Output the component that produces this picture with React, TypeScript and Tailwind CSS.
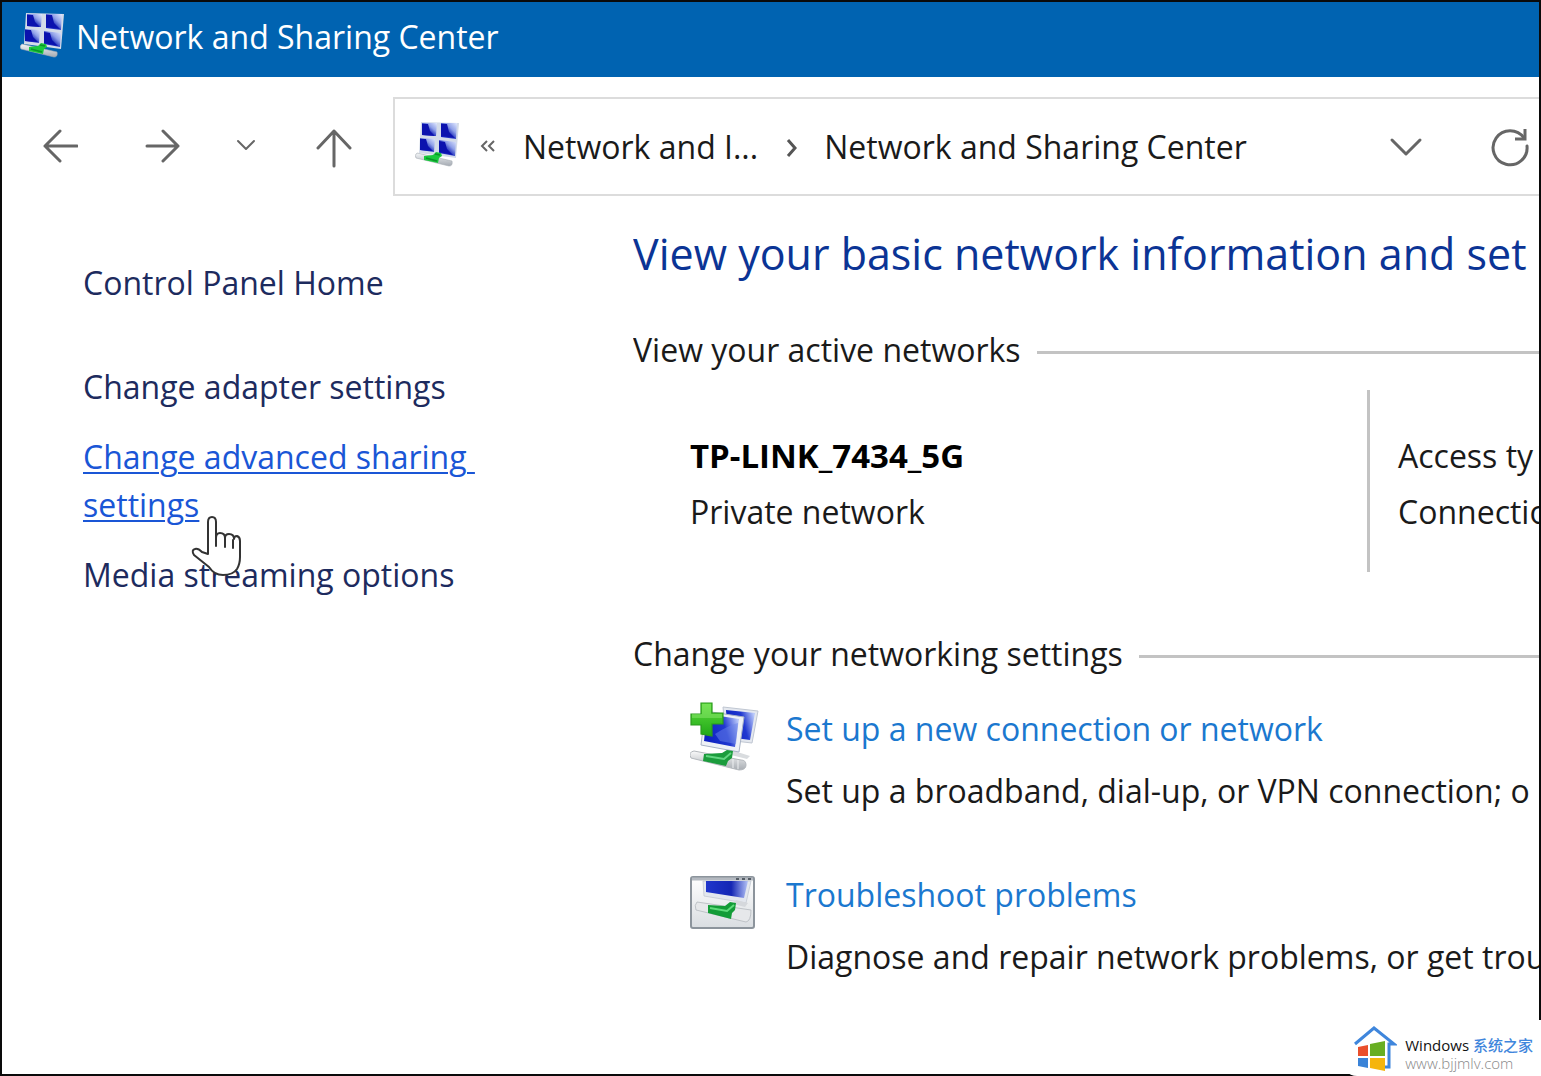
import React from 'react';

interface IconProps {
  className?: string;
}

function NetworkCenterIcon({ className }: IconProps) {
  return (
    <svg viewBox="0 0 44 46" className={className} aria-hidden="true">
      <defs>
        <linearGradient id="screen" x1="0" y1="1" x2="1" y2="0">
          <stop offset="0" stopColor="#0a14c8" />
          <stop offset="0.45" stopColor="#3040c4" />
          <stop offset="0.65" stopColor="#8fa0e8" />
          <stop offset="1" stopColor="#e4ebff" />
        </linearGradient>
        <linearGradient id="cable" x1="0" y1="0" x2="0" y2="1">
          <stop offset="0" stopColor="#f4f6f8" />
          <stop offset="1" stopColor="#a4aab2" />
        </linearGradient>
      </defs>
      <path d="M6 0 44 1 41 36 4 31z" fill="#d3dbe9" />
      <path d="M7 1h15l-1 13-14-1z" fill="url(#screen)" />
      <path d="M26 1h16l-1 16-15-2z" fill="url(#screen)" />
      <path d="M5 16l15 1-1 13-14-2z" fill="url(#screen)" />
      <path d="M24 18l17 2-1 14-16-3z" fill="url(#screen)" />
      <path d="M7 2h6l2 7 5 5-13-1zM26 2h6l2 8 6 6-14-2zM5 17h6l2 7 5 5-13-1zM24 19l6 1 2 7 6 6-14-3z" fill="#0b12ae" />
      <path d="M2 31q-3 2-1 5l33 8q4 0 3-5z" fill="url(#cable)" stroke="#a6acb4" strokeWidth="0.6" />
      <path d="M9 34l9-1 3-3 5 1 1 3-3 2-1 5-14-3z" fill="#19c93c" />
      <path d="M11 36l11 3M20 32l5 1" stroke="#0b9429" strokeWidth="1.5" />
    </svg>
  );
}

function NewConnectionIcon({ className }: IconProps) {
  return (
    <svg viewBox="0 0 70 70" className={className} aria-hidden="true">
      <defs>
        <linearGradient id="monitor" x1="0" y1="0.6" x2="1" y2="0.3">
          <stop offset="0" stopColor="#0b1fc0" />
          <stop offset="0.6" stopColor="#2038d0" />
          <stop offset="1" stopColor="#b9c9fa" />
        </linearGradient>
        <linearGradient id="plus" x1="0" y1="0" x2="0" y2="1">
          <stop offset="0" stopColor="#5fdc3c" />
          <stop offset="1" stopColor="#20a818" />
        </linearGradient>
        <linearGradient id="plug" x1="0" y1="0" x2="0" y2="1">
          <stop offset="0" stopColor="#fafafa" />
          <stop offset="1" stopColor="#a8adb3" />
        </linearGradient>
      </defs>
      <path d="M33 5 68 9 62 41 36 38z" fill="#e4e8ef" stroke="#c0c7d2" />
      <path d="M36 8 65 11 60 38 38 35z" fill="url(#monitor)" />
      <path d="M38 47l22 7-3 3-24-6z" fill="#d9dcdf" />
      <path d="M15 9 54 15 49 50 11 43z" fill="#eef1f6" stroke="#a9b3c6" />
      <path d="M17 12 49 17 45 45 14 39z" fill="url(#monitor)" />
      <path d="M25 32q12-8 23-11l-2 21-16-3z" fill="#6a84ea" opacity="0.5" />
      <path d="M11 1h11v10h11v11H22v12l-11-2V23H1V12h10z" fill="url(#plus)" stroke="#2a9a1d" strokeWidth="1.2" />
      <path d="M12 2h9v10h11v4H2v-4h10z" fill="#9bef7c" opacity="0.4" />
      <path d="M4 49q-6 1-3 7l48 12q7 0 7-5t-5-5z" fill="url(#plug)" stroke="#b4b8bd" />
      <path d="M14 52l18-1 5-3 6 1-1 7-4 3-2 5-23-5z" fill="#1b9c3c" />
      <path d="M16 54l18 3 7-6" stroke="#63d681" strokeWidth="2" fill="none" />
      <path d="M43 57v9M48 58v9" stroke="#eef0f2" strokeWidth="1" />
    </svg>
  );
}

function TroubleshootIcon({ className }: IconProps) {
  return (
    <svg viewBox="0 0 66 54" className={className} aria-hidden="true">
      <defs>
        <linearGradient id="panel" x1="0" y1="0" x2="0" y2="1">
          <stop offset="0" stopColor="#fff" />
          <stop offset="1" stopColor="#d9dde1" />
        </linearGradient>
        <linearGradient id="display" x1="0" y1="0" x2="1" y2="0">
          <stop offset="0" stopColor="#2036cc" />
          <stop offset="0.6" stopColor="#1426b4" />
          <stop offset="1" stopColor="#b4c3f6" />
        </linearGradient>
      </defs>
      <rect x="1" y="1" width="63" height="51" rx="2" fill="url(#panel)" stroke="#8c949c" strokeWidth="2" />
      <path d="M2 3h61" stroke="#b4b9c0" strokeWidth="3" />
      <path d="M46 3h3M52 3h3M58 3h3" stroke="#555d66" strokeWidth="2" />
      <path d="M13 5h48l-5 22-42-7z" fill="#e3e7ee" stroke="#c3c9d2" strokeWidth="0.8" />
      <path d="M16 5h42l-4 17-38-6z" fill="url(#display)" />
      <path d="M7 26q-3 3-1 8l50 12q5-1 5-12z" fill="#e6e8ea" stroke="#b4b9be" strokeWidth="0.8" />
      <path d="M46 24l12 3-3 4-12-3z" fill="#d5d8dc" />
      <path d="M18 29l17 1 5-4 6 1-1 7-3 3-1 6-23-6z" fill="#139c37" />
      <path d="M20 32l17 3 7-6" stroke="#5fdb7b" strokeWidth="2" fill="none" />
    </svg>
  );
}

function SectionTitle({ children }: { children: React.ReactNode }) {
  return (
    <div className="flex items-center gap-4">
      <h2 className="text-[32px] leading-12 text-[#1a1a1a]">{children}</h2>
      <div className="mt-1 h-[3px] flex-1 bg-[#c3c3c3]" />
    </div>
  );
}

interface SettingItemProps {
  icon: React.ReactNode;
  title: string;
  description: string;
}

function SettingItem({ icon, title, description }: SettingItemProps) {
  return (
    <div className="flex">
      <div className="w-24 shrink-0">{icon}</div>
      <div className="text-[32px] leading-[62px]">
        <a href="#" className="block text-[#1b78cf]">{title}</a>
        <p className="text-[#1a1a1a]">{description}</p>
      </div>
    </div>
  );
}

function HandCursor({ className }: IconProps) {
  return (
    <svg viewBox="0 0 50 62" className={className} aria-hidden="true">
      <path
        d="M17 38V6q0-5 4-5t4 5v16q0-5 4-5 5 0 5 5 0-4 4-4 5 0 5 5 0-3 3-3 3 1 3 5v16q0 7-3 12-4 6-14 6-9 0-14-8L3 39q-3-5 1-6 3-1 7 3z"
        fill="#fff"
        stroke="#333"
        strokeWidth="2"
        strokeLinejoin="round"
      />
      <path d="M25 20v10M34 22v9M42 24v8" stroke="#333" strokeWidth="2" strokeLinecap="round" />
    </svg>
  );
}

function TitleBar() {
  return (
    <header className="flex h-[75px] items-start gap-3 bg-[#0063b1] pt-[11px] pl-[18px]">
      <NetworkCenterIcon className="h-[46px] w-[44px]" />
      <h1 className="text-[32px] leading-12 text-white">Network and Sharing Center</h1>
    </header>
  );
}

function Toolbar() {
  return (
    <nav className="flex pt-5">
      <div className="flex w-[391px] shrink-0 items-center pl-10 text-[#666]">
        <button aria-label="Back">
          <svg viewBox="0 0 36 36" className="h-9 w-9" fill="none" stroke="currentColor" strokeWidth="3" strokeLinecap="round" strokeLinejoin="round">
            <path d="M18 2 3 17l15 15M3 17h32" />
          </svg>
        </button>
        <button aria-label="Forward" className="ml-[66px]">
          <svg viewBox="0 0 36 36" className="h-9 w-9" fill="none" stroke="currentColor" strokeWidth="3" strokeLinecap="round" strokeLinejoin="round">
            <path d="M19 2l15 15-15 15M34 17H3" />
          </svg>
        </button>
        <button aria-label="Recent locations" className="mb-1 ml-14">
          <svg viewBox="0 0 20 14" className="h-[14px] w-5" fill="none" stroke="currentColor" strokeWidth="2" strokeLinecap="round" strokeLinejoin="round">
            <path d="M2 3l8 8 8-8" />
          </svg>
        </button>
        <button aria-label="Up" className="mt-1 ml-[59px]">
          <svg viewBox="0 0 38 40" className="h-10 w-[38px]" fill="none" stroke="currentColor" strokeWidth="3" strokeLinecap="round" strokeLinejoin="round">
            <path d="M3 19 19 2l16 17M19 2v35" />
          </svg>
        </button>
      </div>
      <div className="flex h-[99px] min-w-0 flex-1 items-center border-2 border-r-0 border-[#dcdcdc] pr-[10px] pl-5 text-[32px] whitespace-nowrap text-[#1a1a1a]">
        <NetworkCenterIcon className="mb-1 h-[46px] w-[44px]" />
        <svg viewBox="0 0 16 16" className="ml-5 h-4 w-4" fill="none" stroke="#666" strokeWidth="2" aria-hidden="true">
          <path d="M8 2 3 7l5 5M15 2l-5 5 5 5" />
        </svg>
        <button className="ml-7">Network and I...</button>
        <svg viewBox="0 0 12 20" className="mr-[26px] ml-7 h-5 w-3" fill="none" stroke="#555" strokeWidth="3" aria-hidden="true">
          <path d="M2 3l7 8-7 8" />
        </svg>
        <button>Network and Sharing Center</button>
        <button aria-label="Previous locations" className="ml-auto text-[#666]">
          <svg viewBox="0 0 34 20" className="h-5 w-[34px]" fill="none" stroke="currentColor" strokeWidth="3" strokeLinecap="round" strokeLinejoin="round">
            <path d="M3 3l14 14L31 3" />
          </svg>
        </button>
        <button aria-label="Refresh" className="ml-[66px] text-[#666]">
          <svg viewBox="0 0 40 40" className="h-10 w-10" fill="none" stroke="currentColor" strokeWidth="3" strokeLinecap="round">
            <path d="M38 19A17 17 0 1 1 35 11" />
            <path d="M36 2v10H26" strokeLinecap="butt" />
          </svg>
        </button>
      </div>
    </nav>
  );
}

function Sidebar() {
  return (
    <aside className="w-[631px] shrink-0 pt-[63px] pl-[81px] text-[32px] leading-12 text-[#1d2b5e]">
      <a href="#" className="block">Control Panel Home</a>
      <ul className="mt-14 space-y-[22px]">
        <li>
          <a href="#">Change adapter settings</a>
        </li>
        <li className="relative">
          <a href="#" className="text-[#1a56d6] underline decoration-2 underline-offset-3">
            Change advanced sharing&nbsp;<br />
            settings
          </a>
          <HandCursor className="absolute top-[83px] left-[108px] z-10 h-[62px] w-[50px]" />
        </li>
        <li>
          <a href="#">Media streaming options</a>
        </li>
      </ul>
    </aside>
  );
}

function Watermark() {
  return (
    <div className="absolute right-0 bottom-0 flex h-14 items-center gap-2 rounded-bl-2xl bg-white pr-2 pl-3">
      <svg viewBox="0 0 44 46" className="h-[46px] w-[44px]" aria-hidden="true">
        <path d="M2 19 21 3l20 16h-5v23H32" fill="none" stroke="#3f86dc" strokeWidth="3" />
        <path d="M5 22l10-2v11H5z" fill="#ea4f2c" />
        <path d="M17 19l15-3v15H17z" fill="#68ae22" />
        <path d="M5 33h10v10L5 41z" fill="#3a83d8" />
        <path d="M17 33h15v13l-15-3z" fill="#f5b50c" />
      </svg>
      <div className="pt-3 font-['Open_Sans','Noto_Sans_CJK_SC',sans-serif] whitespace-nowrap">
        <p className="text-[15px] leading-[18px] font-medium text-[#111]">
          Windows <span className="text-[#3f86dc]">系统之家</span>
        </p>
        <p className="text-[15px] leading-[18px] font-light text-[#888]">www.bjjmlv.com</p>
      </div>
    </div>
  );
}

export default function App() {
  return (
    <div className="relative font-['Open_Sans',sans-serif]">
      <div className="flex min-h-screen flex-col overflow-hidden border-2 border-[#0a0a0a] bg-white">
        <TitleBar />
        <Toolbar />
        <div className="flex flex-1">
          <Sidebar />
          <main className="min-w-0 flex-1 overflow-hidden pt-7 whitespace-nowrap">
            <h2 className="text-[43px] leading-[60px] text-[#0b3495]">View your basic network information and set</h2>

            <section className="mt-[42px]">
              <SectionTitle>View your active networks</SectionTitle>
              <div className="mt-4 flex pl-[57px] text-[32px] leading-14 text-[#1a1a1a]">
                <div className="flex-1 pt-[38px] pb-8">
                  <p className="text-[33px] font-bold text-black">TP-LINK_7434_5G</p>
                  <p>Private network</p>
                </div>
                <div className="w-[172px] shrink-0 border-l-3 border-[#c3c3c3] pt-[38px] pl-7">
                  <p>Access ty</p>
                  <p>Connectio</p>
                </div>
              </div>
            </section>

            <section className="mt-[58px]">
              <SectionTitle>Change your networking settings</SectionTitle>
              <div className="mt-5 space-y-[42px] pl-[57px]">
                <SettingItem
                  icon={<NewConnectionIcon className="mt-1 h-[70px] w-[70px]" />}
                  title="Set up a new connection or network"
                  description="Set up a broadband, dial-up, or VPN connection; o"
                />
                <SettingItem
                  icon={<TroubleshootIcon className="mt-3 h-[54px] w-[66px]" />}
                  title="Troubleshoot problems"
                  description="Diagnose and repair network problems, or get trou"
                />
              </div>
            </section>
          </main>
        </div>
      </div>
      <Watermark />
    </div>
  );
}
